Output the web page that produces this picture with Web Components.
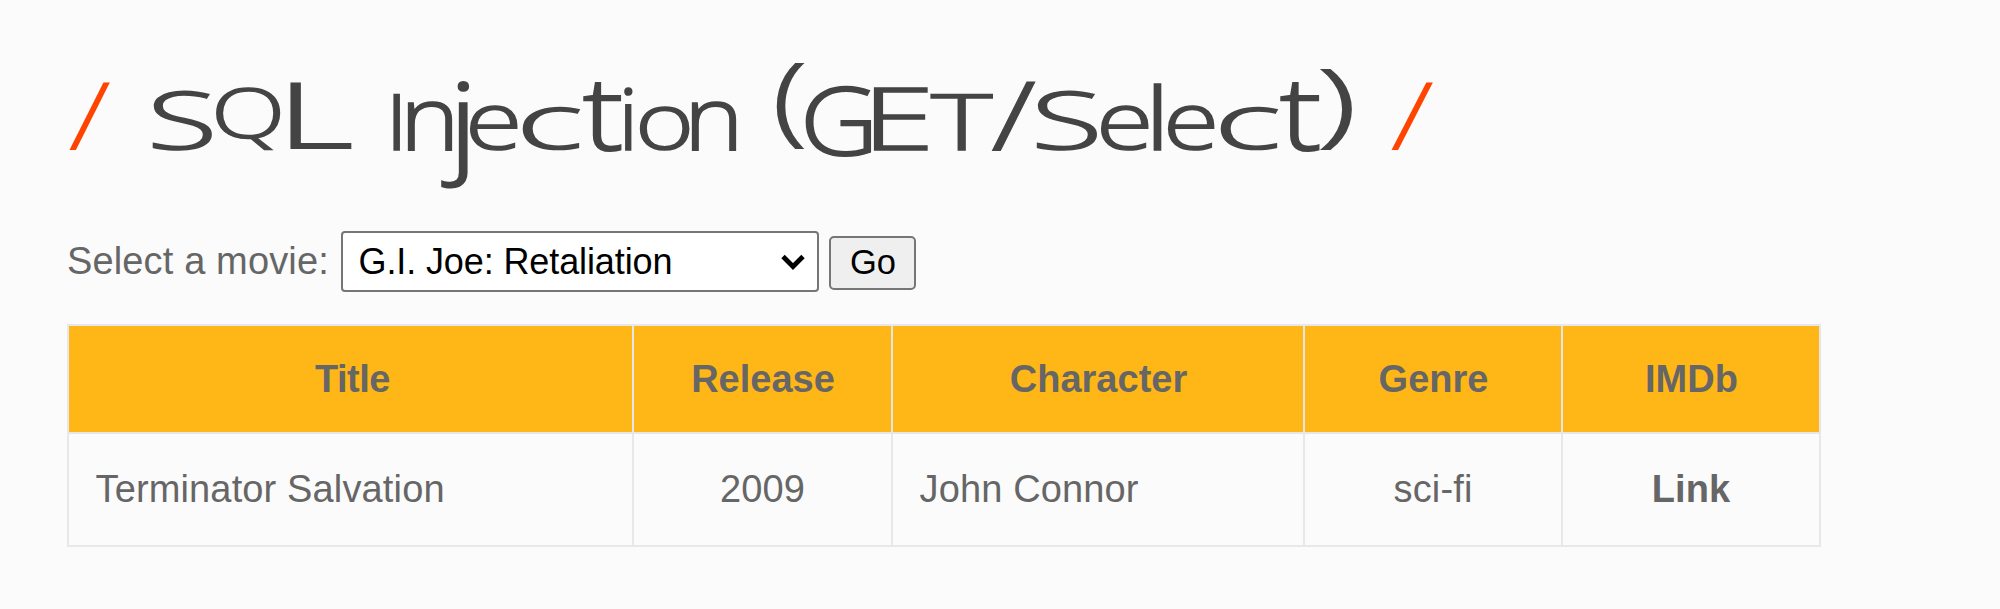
<!DOCTYPE html>
<html lang="en">
<head>
<meta charset="utf-8">
<title>SQL Injection (GET/Select)</title>
<style>
html,body{margin:0;height:100%;overflow:hidden;background:#fbfbfb}
body{font:38px/44px "Liberation Sans",Arial,sans-serif;color:#666}
</style>
</head>
<body>
<movie-page></movie-page>
<script>
const BOXES = [
  [69,112,82,151],
  [152,212,90,151],[216,281,88,151],[290,352,82,149],
  [393,400,93,151],[407,452,101,151],[441,469,81,188],[469,518,105,151],[522,581,107,151],[584,622,83,153],[624,633,87,151],[639,690,106,151],[692,737,101,151],
  [777,804,64,150],[806,872,86,157],[874,929,87,151],[930,993,93,151],[993,1036,82,151],[1037,1098,90,151],[1100,1149,105,151],[1154,1162,83,151],[1167,1215,105,151],[1220,1279,107,151],[1281,1320,83,153],[1321,1352,70,151],
  [1391,1435,82,151]
];
const LEFT = 67, TOP = 60, FONT = '300 86px "Open Sans","Noto Sans",sans-serif';

class PageTitle extends HTMLElement {
  connectedCallback() {
    const root = this.attachShadow({mode: 'open'});
    root.innerHTML = `<style>
      :host{display:block;height:120px;color:#444}
      h1{margin:0;font:300 86px/120px "Open Sans","Noto Sans",sans-serif;white-space:pre;-webkit-text-stroke:1.7px currentColor}
      span{display:inline-block;font-kerning:none}
      .mark{color:#ff4400;-webkit-text-stroke:0}
    </style><h1></h1>`;
    const h1 = root.querySelector('h1');
    const ctx = document.createElement('canvas').getContext('2d');
    ctx.font = FONT;
    const glyphs = [];
    for (const ch of this.getAttribute('text')) {
      if (ch === ' ') { glyphs[glyphs.length - 1].s += ch; continue; }
      const m = ctx.measureText(ch);
      const [x0, x1, y0, y1] = BOXES[glyphs.length];
      const base = 60 + (m.fontBoundingBoxAscent - m.fontBoundingBoxDescent) / 2;
      const sx = (x1 - x0 - 1.6) / (m.actualBoundingBoxLeft + m.actualBoundingBoxRight);
      const sy = (y1 - y0 - 1.6) / (m.actualBoundingBoxAscent + m.actualBoundingBoxDescent);
      glyphs.push({s: ch, sx, sy, base,
        x: x0 + .8 - LEFT + sx * m.actualBoundingBoxLeft,
        ty: y1 - .8 - TOP - base - sy * m.actualBoundingBoxDescent});
    }
    glyphs.forEach((g, i) => {
      const span = document.createElement('span');
      span.textContent = g.s;
      if (i === 0) span.style.marginLeft = g.x + 'px';
      if (i === 0 || i === glyphs.length - 1) span.className = 'mark';
      span.style.transformOrigin = `0 ${g.base}px`;
      span.style.transform = `translateY(${g.ty}px) scale(${g.sx},${g.sy})`;
      h1.append(span);
      const next = glyphs[i + 1];
      if (next) {
        const step = next.x - g.x, width = step / g.sx;
        const natural = span.getBoundingClientRect().width / g.sx;
        span.style.letterSpacing = (width - natural) / g.s.length + 'px';
        span.style.width = width + 'px';
        span.style.marginRight = step - width + 'px';
      }
    });
  }
}
customElements.define('page-title', PageTitle);

class MovieSelect extends HTMLElement {
  connectedCallback() {
    this.attachShadow({mode: 'open'}).innerHTML = `<style>
      :host{display:flex;align-items:center;justify-content:space-between;box-sizing:border-box;width:478px;height:61px;
        padding:0 11px 0 15.5px;border:2px solid #767676;border-radius:4px;background:#fff;color:#000;font-size:36px;letter-spacing:-.11px}
      svg{display:block;width:26px;height:18px}
    </style><span><slot></slot></span>
    <svg viewBox="0 0 26 18"><path d="M3 3.5 13 13.5 23 3.5" fill="none" stroke="#000" stroke-width="4.8"/></svg>`;
  }
}
customElements.define('movie-select', MovieSelect);

class GoButton extends HTMLElement {
  connectedCallback() {
    this.attachShadow({mode: 'open'}).innerHTML = `<style>
      :host{display:flex;align-items:center;justify-content:center;box-sizing:border-box;width:87px;height:54px;
        padding:0 0 2px 1px;border:2px solid #767676;border-radius:5px;background:#efefef;color:#000;font-size:34.5px}
    </style><span><slot></slot></span>`;
  }
}
customElements.define('go-button', GoButton);

class MovieCell extends HTMLElement {
  connectedCallback() {
    this.attachShadow({mode: 'open'}).innerHTML = `<style>
      :host{display:flex;align-items:center;justify-content:center;box-sizing:border-box;border:solid #e8e8e8;border-width:0 2px 2px 0;
        padding:0 0 2px;letter-spacing:.14px}
      :host([start]){justify-content:flex-start;padding-left:26.5px}
      :host([head]){background:#ffb717;font-weight:bold;border-color:#e6e6e6;padding:0 0 0 1px;letter-spacing:0}
      :host([strong]){font-weight:bold}
    </style><slot></slot>`;
  }
}
customElements.define('movie-cell', MovieCell);

class MovieTable extends HTMLElement {
  connectedCallback() {
    this.attachShadow({mode: 'open'}).innerHTML = `<style>
      :host{display:grid;box-sizing:border-box;width:1754px;grid-template:108px 113px/565px 259px 412px 258px 258px;
        border:solid #e6e8ec;border-width:2px 0 0 2px}
    </style><slot></slot>`;
  }
}
customElements.define('movie-table', MovieTable);

class MoviePage extends HTMLElement {
  connectedCallback() {
    this.attachShadow({mode: 'open'}).innerHTML = `<style>
      :host{display:block;box-sizing:border-box;height:609px;padding:60px 0 0 67px;background:#fbfbfb}
      .pick{display:flex;align-items:center;height:61px;margin-top:51px}
      .pick span{width:274px;flex:none;white-space:nowrap;letter-spacing:.14px;padding-bottom:2px}
      go-button{margin-left:10px;margin-top:2px}
      movie-table{margin-top:32px}
      .first{letter-spacing:-.5px;padding-left:4px}
    </style>
    <page-title text="/ SQL Injection (GET/Select) /"></page-title>
    <div class="pick"><span>Select a movie:</span><movie-select>G.I. Joe: Retaliation</movie-select><go-button>Go</go-button></div>
    <movie-table>
      <movie-cell head class="first">Title</movie-cell><movie-cell head>Release</movie-cell><movie-cell head>Character</movie-cell><movie-cell head>Genre</movie-cell><movie-cell head>IMDb</movie-cell>
      <movie-cell start>Terminator Salvation</movie-cell><movie-cell>2009</movie-cell><movie-cell start>John Connor</movie-cell><movie-cell>sci-fi</movie-cell><movie-cell strong>Link</movie-cell>
    </movie-table>`;
  }
}
customElements.define('movie-page', MoviePage);
</script>
</body>
</html>
